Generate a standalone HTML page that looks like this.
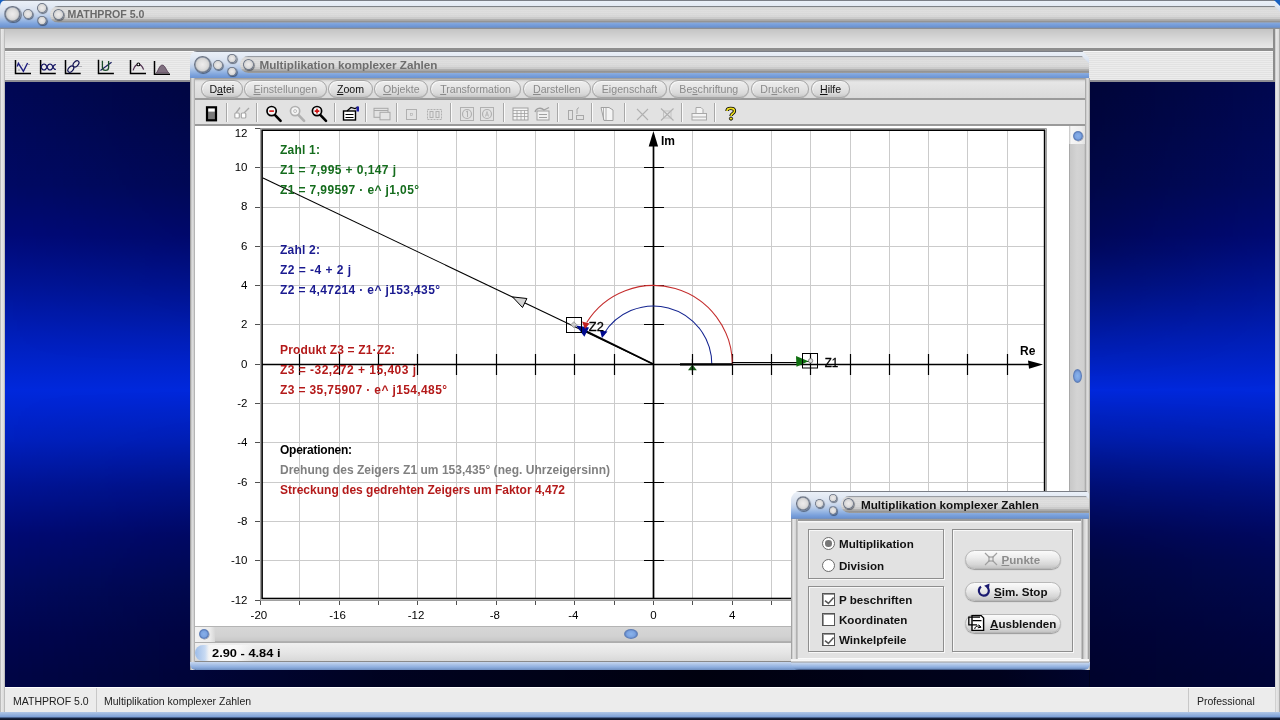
<!DOCTYPE html>
<html><head><meta charset="utf-8">
<style>
*{margin:0;padding:0;box-sizing:border-box}
html,body{width:1280px;height:720px;overflow:hidden;background:#d6d6d6;font-family:"Liberation Sans",sans-serif}
.a{position:absolute}
/* outer window */
#otitle{left:0;top:0;width:1280px;height:29px;background:linear-gradient(#6b7c92 0,#6b7c92 1px,#e4ecf6 1px,#d6e2f0 6px,#b8cce6 14px,#86a8dc 22px,#6e96d2 27px,#7c8ea6 28px,#8a8a8a 29px)}
.pill{background:linear-gradient(#7a7a7a 0,#8c8c8c 1px,#cfcfcf 2px,#dcdcdc 6px,#d8d8d8 10px,#e6e6e6 13px,#cfcfcf 15px,#8d8d8d 16px);border-radius:9px}
#omenu{left:5px;top:29px;width:1270px;height:19px;background:linear-gradient(#c4c4c4 0,#c8c8c8 2px,#d6d6d6 9px,#e2e2e2 15px,#e8e8e8 19px)}
#otool{left:5px;top:48px;width:1268px;height:34px;background:repeating-linear-gradient(#ececec 0,#ececec 1px,#e2e2e2 1px,#e2e2e2 2px);border-top:3px solid #8e8e8e;border-bottom:2px solid #8e8e94;box-shadow:inset 0 1px 0 #f8f8f8}
#mdi{left:5px;top:82px;width:1270px;height:605px;background:linear-gradient(rgb(0, 8, 85) 8px,rgb(0, 10, 100) 103px,rgb(0, 10, 120) 153px,rgb(0, 20, 150) 203px,rgb(0, 30, 185) 253px,rgb(0, 40, 220) 308px,rgb(0, 32, 190) 358px,rgb(0, 20, 150) 403px,rgb(0, 10, 115) 453px,rgb(0, 10, 95) 503px,rgb(0, 6, 80) 553px,rgb(0, 6, 70) 593px)}
#ostatus{left:0;top:687px;width:1280px;height:25px;background:#ececec;border-top:1px solid #fff;font-size:11px;color:#222}
#obottom{left:0;top:712px;width:1280px;height:8px;background:linear-gradient(#b0c6e6,#7b9fd6 5px,#1a2a4a 6px,#0a1020)}
#oleft{left:0;top:29px;width:5px;height:683px;background:linear-gradient(90deg,#9c9c9c,#e8e8e8 1.2px,#dadada 4px,#a0a0a0 5px)}
#oright{left:1275px;top:29px;width:5px;height:683px;background:linear-gradient(90deg,#b8b8b8,#e8e8e8 1px,#dcdcdc 3.5px,#9a9a9a 5px)}
/* child window */
#child{left:190px;top:50px;width:900px;height:620px}
.ctitle{left:0;top:0;width:899px;height:28px;border-radius:8px 8px 0 0;background:linear-gradient(#8a9ab0 0,#dfe8f4 1px,#d3dff0 5px,#b6cae6 12px,#88aadc 20px,#6e96d2 26px,#7e8ea4 27px,#8a8a8a 28px)}
.circ{position:absolute;border-radius:50%;background:radial-gradient(circle closest-side at 50% 50%,#eeecec 0,#e0dfdf 50%,#d2d2d2 74%,#9098a6 84%,#687080 93%,rgba(80,88,104,.55) 100%);box-shadow:0.8px 1px 0.8px rgba(30,36,50,.55)}
.menu{font-size:11px;color:#8a8a8a}
.mp{position:absolute;top:80px;height:17.5px;border-radius:9px;background:linear-gradient(#eeeeee,#e4e4e4 45%,#d8d8d8 80%,#c6c6c6);border:1px solid #a6a6a6;box-shadow:inset 1px 1px 0 #f6f6f6,0 0.5px 0.5px #b0b0b0;text-align:center;line-height:15px;padding-top:1.6px;font:10.6px 'Liberation Sans';color:#8a8a8a;white-space:nowrap}
.mp.on{color:#111}
.u{text-decoration:underline}
</style></head><body>
<style>
.gb{border:1px solid #8e8e8e;box-shadow:inset 1px 1px 0 #f8f8f8,1px 1px 0 #f8f8f8}
.radio{width:13px;height:13px;border-radius:50%;border:1.3px solid #6a6a6a;background:#fff}
.radio i{position:absolute;left:2.2px;top:2.2px;width:6.6px;height:6.6px;border-radius:50%;background:#777}
.chk{width:13px;height:13px;border:1px solid #555;background:#fff;box-shadow:inset 1px 1px 0 #999}
.chk svg{position:absolute;left:0;top:0}
.dl{font:bold 11.6px 'Liberation Sans';color:#111;line-height:14px;white-space:nowrap}
.btn{width:96px;height:19px;border-radius:10px;background:linear-gradient(#fbfbfb,#ececec 40%,#d6d6d6 80%,#c4c4c4);border:1px solid #b8b8b8;box-shadow:0 1px 1px #9a9a9a}
</style>
<style>
.mp{position:absolute;top:80px;height:17.5px;border-radius:9px;background:linear-gradient(#eeeeee,#e4e4e4 45%,#d8d8d8 80%,#c6c6c6);border:1px solid #a6a6a6;box-shadow:inset 1px 1px 0 #f6f6f6,0 0.5px 0.5px #b0b0b0;text-align:center;line-height:15px;padding-top:1.6px;font:10.6px 'Liberation Sans';color:#8a8a8a;white-space:nowrap}
.mp.on{color:#111}
</style>
<style>
.tb{background:linear-gradient(#7a7e86 0,#7a7e86 0.8px,#eaf0f8 1px,#e2e9f3 6px,#d2ddee 12px,#b6cae8 17px,#94b4e2 21px,#7ca2dc 24px,#6a92d0 27.3px,#8a8e96 28px,#909090 100%)}
.tpill{background:repeating-linear-gradient(rgba(255,255,255,.12) 0,rgba(255,255,255,.12) 1px,rgba(0,0,0,0) 1px,rgba(0,0,0,0) 2px),linear-gradient(#666a70 0,#767a80 1px,#d2d2d2 1.2px,#dcdcdc 5px,#d6d6d6 10px,#c4c4c4 12.5px,#9c9c9c 14.5px,#8a8a8a 16.8px);border-radius:8.4px 0 0 8.4px}
</style>
<div id="root" style="position:absolute;left:0;top:0;width:1280px;height:720px;will-change:transform">
<div class="a" style="left:0;top:0;width:8px;height:8px;background:#1860c0"></div><div class="a" style="left:1270px;top:0;width:10px;height:8px;background:#1860c0"></div>
<div class="a tb" style="left:0px;top:0px;width:1280px;height:29px;border-top-left-radius:6px;clip-path:polygon(0 0,1274px 0,1280px 6px,1280px 100%,0 100%)"></div>
<div class="a tpill" style="left:50px;top:5.8px;width:1230px;height:16.8px;clip-path:polygon(0 0,1224px 0,1230px 6px,1230px 100%,0 100%)"></div>
<div class="a circ" style="left:4.1px;top:5.8px;width:16.5px;height:16.5px"></div>
<div class="a circ" style="left:23.2px;top:9.0px;width:10px;height:10px"></div>
<div class="a circ" style="left:37.2px;top:3.2px;width:9.5px;height:9.5px"></div>
<div class="a circ" style="left:37.2px;top:15.9px;width:9.5px;height:9.5px"></div>
<div class="a circ" style="left:52.5px;top:8.7px;width:11px;height:11px"></div>
<div class="a" style="left:67.5px;top:7.8px;font:bold 10.6px 'Liberation Sans';color:#6a6a6a;line-height:13px;white-space:nowrap">MATHPROF 5.0</div>
<div class="a" id="omenu"></div>
<div class="a" id="otool"></div>
<svg class="a" style="left:5px;top:50px" width="200" height="30" viewBox="5 50 200 30">
<path d="M15.5 60.1V73.4H31" stroke="#000" stroke-width="1.5" fill="none"/>
<path d="M40.6 60.1V73.4H55.8" stroke="#000" stroke-width="1.5" fill="none"/>
<path d="M65.5 60V73.5H80.7" stroke="#000" stroke-width="1.5" fill="none"/>
<path d="M98.5 59.8V73.4H113.9" stroke="#000" stroke-width="1.5" fill="none"/>
<path d="M130.5 59.9V73.4H146" stroke="#000" stroke-width="1.5" fill="none"/>
<path d="M154.5 61V74.3H170" stroke="#000" stroke-width="1.5" fill="none"/>
<path d="M17.2 66.4L18.4 63.3L23.4 71.4L27.6 63" stroke="#1e1e80" stroke-width="1.4" fill="none"/><path d="M18 70H20M22 65.5L23 65M28 64.5H30" stroke="#8a8a9a" stroke-width="0.8"/>
<path d="M41 67C42.5 63 45.5 63 47 67C48.5 71 51.5 71 53 67C53.7 65 55 64.3 55.8 64.6M41 67C42.5 71 45.5 71 47 67C48.5 63 51.5 63 53 67C53.7 69 55 69.7 55.8 69.4" stroke="#101060" stroke-width="1.2" fill="none"/>
<path d="M73 66.5H82" stroke="#9a9aa0" stroke-width="0.7"/><ellipse cx="76" cy="63.9" rx="2.3" ry="3.6" transform="rotate(40 76 63.9)" stroke="#101050" stroke-width="1.2" fill="none"/><ellipse cx="70.8" cy="69.1" rx="2.3" ry="3.6" transform="rotate(40 70.8 69.1)" stroke="#101050" stroke-width="1.2" fill="none"/>
<path d="M100.4 70.6L111.6 62.3" stroke="#1a2060" stroke-width="1.2"/><path d="M102.4 60.8V67.5C102.4 71.3 108.6 71.3 108.6 67.5V61" stroke="#1a4a2a" stroke-width="1.3" fill="none"/>
<path d="M133.1 70.4C134.5 66 136.5 64.4 138.4 64.4C140.5 64.4 142.5 66.5 143.6 69.6" stroke="#503050" stroke-width="1.3" fill="none"/><circle cx="138.4" cy="64.4" r="1.4" fill="#fff" stroke="#000" stroke-width="1.1"/>
<path d="M156.4 72.8C158.5 70 159.5 65.1 162.3 65.1C165 65.1 166 70 168.7 72.8Z" fill="#807080" stroke="#503a50" stroke-width="0.8"/>
</svg>
<div class="a" id="mdi" style="width:1270px"></div>
<div class="a" style="left:1089px;top:82px;width:186px;height:308px;background:linear-gradient(90deg,rgba(0,0,8,.36),rgba(0,0,8,.06));-webkit-mask-image:linear-gradient(#000 0,#000 40px,rgba(0,0,0,.75) 168px,transparent 308px)"></div>
<div class="a" style="left:1089px;top:390px;width:186px;height:297px;background:linear-gradient(90deg,rgba(0,0,8,.4),rgba(0,0,8,.22));-webkit-mask-image:linear-gradient(transparent 0,#000 170px,#000 297px)"></div>
<div class="a" style="left:190px;top:600px;width:900px;height:87px;background:linear-gradient(90deg,rgba(0,0,8,.22) 0,rgba(0,0,8,.6) 190px,rgba(0,0,6,.86) 510px,rgba(0,0,8,.66) 810px,rgba(0,0,8,.4) 900px)"></div>
<div class="a" style="left:5px;top:82px;width:185px;height:280px;background:linear-gradient(90deg,rgba(0,0,8,0),rgba(0,0,8,.22));-webkit-mask-image:linear-gradient(#000 0,#000 30px,transparent 280px)"></div>
<div class="a" style="left:5px;top:390px;width:185px;height:297px;background:linear-gradient(90deg,rgba(0,0,8,0),rgba(0,0,8,.2));-webkit-mask-image:linear-gradient(transparent 0,#000 210px,#000 297px)"></div>
<div class="a" id="ostatus" style="font-size:10.5px">
 <div class="a" style="left:13px;top:7px">MATHPROF 5.0</div>
 <div class="a" style="left:96px;top:0;width:1px;height:24px;background:#c8c8c8"></div>
 <div class="a" style="left:104px;top:7px">Multiplikation komplexer Zahlen</div>
 <div class="a" style="left:1188px;top:0;width:1px;height:24px;background:#c8c8c8"></div>
 <div class="a" style="left:1197px;top:7px">Professional</div>
</div>
<div class="a" id="oleft"></div><div class="a" id="oright"></div><div class="a" style="left:1273px;top:29px;width:2px;height:53px;background:#8c8c8c"></div>
<div class="a" id="obottom"></div>

<!-- child window -->
<div class="a tb" style="left:190px;top:50.5px;width:899px;height:28px;border-top-left-radius:7px;clip-path:polygon(0 0,892px 0,899px 7px,899px 100%,0 100%)"></div>
<div class="a tpill" style="left:240px;top:56.3px;width:849px;height:16.8px;clip-path:polygon(0 0,842px 0,849px 7px,849px 100%,0 100%)"></div>
<div class="a circ" style="left:194.1px;top:56.2px;width:16.5px;height:16.5px"></div>
<div class="a circ" style="left:213.2px;top:59.5px;width:10px;height:10px"></div>
<div class="a circ" style="left:227.2px;top:53.8px;width:9.5px;height:9.5px"></div>
<div class="a circ" style="left:227.2px;top:66.5px;width:9.5px;height:9.5px"></div>
<div class="a circ" style="left:242.5px;top:59.2px;width:11px;height:11px"></div>
<div class="a" style="left:259.5px;top:57.5px;font:bold 11.7px 'Liberation Sans';color:#6e6e6e;line-height:13px;white-space:nowrap">Multiplikation komplexer Zahlen</div>
<div class="a" style="left:190px;top:78px;width:900px;height:592px;background:linear-gradient(90deg,#8c8c8c,#e0e0e0 2px,#cfcfcf 4px,#9a9a9a 5px,transparent 5px,transparent 895px,#9a9a9a 895px,#e0e0e0 897px,#cfcfcf 899px,#8c8c8c 900px)"></div>
<div class="a" style="left:195px;top:78px;width:890px;height:20px;background:linear-gradient(#a0a0a0 0,#a0a0a0 1px,#cfcfcf 2px,#e6e6e6 4px,#dadada)"></div>
<div class="a" style="left:195px;top:98px;width:890px;height:28px;background:#e2e2e2;border-top:2px solid #9a9a9a;border-bottom:2px solid #9a9a9a"></div>
<div class="a mp on" style="left:200.8px;width:42.0px">D<span class="u">a</span>tei</div>
<div class="a mp" style="left:244.0px;width:82.6px"><span class="u">E</span>instellungen</div>
<div class="a mp on" style="left:327.9px;width:45.1px"><span class="u">Z</span>oom</div>
<div class="a mp" style="left:374.3px;width:54.1px"><span class="u">O</span>bjekte</div>
<div class="a mp" style="left:429.7px;width:91.8px"><span class="u">T</span>ransformation</div>
<div class="a mp" style="left:523.0px;width:67.7px"><span class="u">D</span>arstellen</div>
<div class="a mp" style="left:592.0px;width:75.0px">Ei<span class="u">g</span>enschaft</div>
<div class="a mp" style="left:668.6px;width:80.4px">Be<span class="u">s</span>chriftung</div>
<div class="a mp" style="left:750.6px;width:58.8px">Dr<span class="u">u</span>cken</div>
<div class="a mp on" style="left:810.8px;width:39.6px"><span class="u">H</span>ilfe</div>
<svg class="a" style="left:195px;top:100px" width="890" height="26" viewBox="195 100 890 26">
<path d="M226.5 103V122" stroke="#a8a8a8"/><path d="M227.5 103V122" stroke="#fafafa"/>
<path d="M256.5 103V122" stroke="#a8a8a8"/><path d="M257.5 103V122" stroke="#fafafa"/>
<path d="M334.5 103V122" stroke="#a8a8a8"/><path d="M335.5 103V122" stroke="#fafafa"/>
<path d="M365.5 103V122" stroke="#a8a8a8"/><path d="M366.5 103V122" stroke="#fafafa"/>
<path d="M396.5 103V122" stroke="#a8a8a8"/><path d="M397.5 103V122" stroke="#fafafa"/>
<path d="M450.5 103V122" stroke="#a8a8a8"/><path d="M451.5 103V122" stroke="#fafafa"/>
<path d="M503.5 103V122" stroke="#a8a8a8"/><path d="M504.5 103V122" stroke="#fafafa"/>
<path d="M557.5 103V122" stroke="#a8a8a8"/><path d="M558.5 103V122" stroke="#fafafa"/>
<path d="M591.5 103V122" stroke="#a8a8a8"/><path d="M592.5 103V122" stroke="#fafafa"/>
<path d="M624.5 103V122" stroke="#a8a8a8"/><path d="M625.5 103V122" stroke="#fafafa"/>
<path d="M681.5 103V122" stroke="#a8a8a8"/><path d="M682.5 103V122" stroke="#fafafa"/>
<path d="M714.5 103V122" stroke="#a8a8a8"/><path d="M715.5 103V122" stroke="#fafafa"/>
<rect x="207" y="107.3" width="9" height="13" fill="#7a7a7a" stroke="#000" stroke-width="2.2"/><rect x="208.3" y="108.6" width="6.4" height="3" fill="#fff"/>
<path d="M236 113L240 107.5M244 113L249 108" stroke="#a8a8a8" stroke-width="1.3" fill="none"/><rect x="234.8" y="113" width="4.5" height="5" rx="1" fill="#fff" stroke="#a8a8a8" stroke-width="1.2"/><rect x="241.3" y="113" width="4.5" height="5" rx="1" fill="#fff" stroke="#a8a8a8" stroke-width="1.2"/>
<path d="M274.6 114.6L280.6 120.89999999999999" stroke="#000" stroke-width="2.6" stroke-linecap="round"/><circle cx="271.6" cy="111.1" r="4.6" fill="#f4f4f4" stroke="#000" stroke-width="1.7"/><path d="M269.3 111.1H273.90000000000003" stroke="#d01010" stroke-width="1.6"/>
<path d="M298.1 114.6L304.1 120.89999999999999" stroke="#b0b0b0" stroke-width="2.6" stroke-linecap="round"/><circle cx="295.1" cy="111.1" r="4.6" fill="#f4f4f4" stroke="#b0b0b0" stroke-width="1.7"/><circle cx="295.1" cy="111.1" r="1.5" fill="none" stroke="#b0b0b0" stroke-width="0.8"/>
<path d="M320 114.6L326 120.89999999999999" stroke="#000" stroke-width="2.6" stroke-linecap="round"/><circle cx="317" cy="111.1" r="4.6" fill="#f4f4f4" stroke="#000" stroke-width="1.7"/><path d="M314.7 111.1H319.3M317 108.8V113.39999999999999" stroke="#d01010" stroke-width="1.6"/>
<rect x="343.5" y="111" width="12" height="9" fill="#fff" stroke="#000" stroke-width="1.4"/><path d="M345.5 114.5H353.5M345.5 117.5H353.5" stroke="#000" stroke-width="1"/><path d="M347 111L351 107.5L355 108.5L358 107" stroke="#000" stroke-width="1.2" fill="none"/><rect x="356.5" y="106.5" width="2.5" height="5" fill="#1a1aa0"/>
<rect x="374" y="108.3" width="14" height="9" fill="none" stroke="#a8a8a8" stroke-width="1"/><rect x="380" y="112.3" width="10" height="7.5" fill="#e4e4e4" stroke="#a8a8a8" stroke-width="1"/><path d="M374 110.5H388" stroke="#a8a8a8"/>
<rect x="406.5" y="109.5" width="10" height="10" fill="none" stroke="#b0b0b0"/><rect x="410.5" y="113.5" width="2" height="2" fill="none" stroke="#b0b0b0" stroke-width="0.6"/>
<rect x="427.5" y="109.5" width="14" height="10" fill="none" stroke="#b0b0b0" stroke-dasharray="2 1"/><rect x="430" y="111.5" width="3" height="6" fill="none" stroke="#b0b0b0"/><rect x="436" y="111.5" width="3" height="6" fill="none" stroke="#b0b0b0"/>
<rect x="460.5" y="107.5" width="13" height="13" fill="none" stroke="#b0b0b0"/><circle cx="467" cy="114" r="4.5" fill="none" stroke="#b0b0b0" stroke-width="1.2"/><path d="M466 112L467.5 111V117" stroke="#b0b0b0" fill="none"/>
<rect x="480.5" y="107.5" width="13" height="13" fill="none" stroke="#b0b0b0"/><circle cx="487" cy="114" r="4.5" fill="none" stroke="#b0b0b0" stroke-width="1.2"/><path d="M485.5 116.5L487 111.5L488.5 116.5M485.8 115H488.2" stroke="#b0b0b0" fill="none" stroke-width="0.8"/>
<rect x="513" y="108" width="15" height="12" fill="#f4f4f4" stroke="#a0a0a0"/><path d="M513 110.5H528M513 113.5H528M513 116.5H528M517 110.5V120M521 110.5V120M524.5 110.5V120" stroke="#a0a0a0" stroke-width="0.8"/>
<rect x="537" y="111" width="12" height="9" fill="#f0f0f0" stroke="#a0a0a0"/><path d="M539 114.5H547M539 117.5H547" stroke="#a0a0a0"/><path d="M535 112C536 108 541 107 544 110L549 107.5" stroke="#a0a0a0" stroke-width="1.3" fill="none"/>
<rect x="568.5" y="110.5" width="4" height="9" fill="none" stroke="#a8a8a8"/><rect x="576.5" y="115.5" width="7" height="4" fill="none" stroke="#a8a8a8"/><path d="M577 114V109L579 107.5" stroke="#a8a8a8" fill="none"/>
<path d="M601 107.5H609L613 110V120.5H604Z" fill="#f4f4f4" stroke="#a0a0a0"/><path d="M603.5 108V120M606 108V120" stroke="#a0a0a0" stroke-width="0.8"/>
<path d="M637 109L648 120M648 109L637 120" stroke="#b0b0b0" stroke-width="1.1"/><path d="M640 112L645 117M645 112L640 117" stroke="#b0b0b0" stroke-width="0.8"/>
<path d="M661 108.5L673.5 120.5M673.5 108.5L661 120.5" stroke="#b0b0b0" stroke-width="1.1"/><rect x="663.5" y="111" width="7.5" height="7" fill="none" stroke="#b8b8b8" stroke-width="0.7"/>
<rect x="692" y="113.5" width="14.5" height="6.5" fill="#f4f4f4" stroke="#a8a8a8"/><path d="M696 113V107.5H701L703 109.5V113" fill="#f4f4f4" stroke="#a8a8a8"/><path d="M692 117H706.5" stroke="#a8a8a8"/>
<path d="M727 111C727 107.5 734.5 107.5 734.5 111C734.5 113.5 731 113.5 731 116" stroke="#000" stroke-width="3.3" fill="none"/><path d="M727 111C727 107.5 734.5 107.5 734.5 111C734.5 113.5 731 113.5 731 116" stroke="#f0e020" stroke-width="1.6" fill="none"/><circle cx="731" cy="118.6" r="1.6" fill="#f0e020" stroke="#000" stroke-width="0.9"/>
</svg>
<svg class="a" style="left:195px;top:126px" width="874" height="500" viewBox="195 126 874 500">
<rect x="195" y="126" width="874" height="500" fill="#fff"/>
<path d="M299.5 130V598M339.5 130V598M378.5 130V598M417.5 130V598M456.5 130V598M496.5 130V598M535.5 130V598M574.5 130V598M614.5 130V598M692.5 130V598M732.5 130V598M771.5 130V598M810.5 130V598M850.5 130V598M889.5 130V598M928.5 130V598M967.5 130V598M1007.5 130V598M262 560.5H1045M262 521.5H1045M262 482.5H1045M262 442.5H1045M262 403.5H1045M262 324.5H1045M262 285.5H1045M262 246.5H1045M262 207.5H1045M262 167.5H1045" stroke="#cbcbcb" stroke-width="1" fill="none"/>
<path d="M255 600.5H261M255 560.5H261M255 521.5H261M255 482.5H261M255 442.5H261M255 403.5H261M255 364.5H261M255 324.5H261M255 285.5H261M255 246.5H261M255 207.5H261M255 167.5H261M255 128.5H261M260.5 600V605M299.5 600V605M339.5 600V605M378.5 600V605M417.5 600V605M456.5 600V605M496.5 600V605M535.5 600V605M574.5 600V605M614.5 600V605M653.5 600V605M692.5 600V605M732.5 600V605M771.5 600V605M810.5 600V605M850.5 600V605M889.5 600V605M928.5 600V605M967.5 600V605M1007.5 600V605M1046.5 600V605" stroke="#505050" stroke-width="1" fill="none"/>
<path d="M260.5 128.5V600.5H1046.5V128.5Z" stroke="#a0a0a0" stroke-width="1" fill="none"/>
<rect x="262.1" y="130.2" width="782.5" height="468.3" stroke="#000" stroke-width="1.6" fill="none"/>
<g font-family="Liberation Sans" font-size="11.5" fill="#000"><text x="247.5" y="603.5" text-anchor="end">-12</text><text x="247.5" y="564.1" text-anchor="end">-10</text><text x="247.5" y="524.8" text-anchor="end">-8</text><text x="247.5" y="485.5" text-anchor="end">-6</text><text x="247.5" y="446.2" text-anchor="end">-4</text><text x="247.5" y="406.9" text-anchor="end">-2</text><text x="247.5" y="367.6" text-anchor="end">0</text><text x="247.5" y="328.3" text-anchor="end">2</text><text x="247.5" y="289.0" text-anchor="end">4</text><text x="247.5" y="249.7" text-anchor="end">6</text><text x="247.5" y="210.4" text-anchor="end">8</text><text x="247.5" y="171.1" text-anchor="end">10</text><text x="247.5" y="136.7" text-anchor="end">12</text><text x="258.9" y="619" text-anchor="middle">-20</text><text x="337.5" y="619" text-anchor="middle">-16</text><text x="416.1" y="619" text-anchor="middle">-12</text><text x="494.8" y="619" text-anchor="middle">-8</text><text x="573.4" y="619" text-anchor="middle">-4</text><text x="653.5" y="619" text-anchor="middle">0</text><text x="732.1" y="619" text-anchor="middle">4</text><text x="810.7" y="619" text-anchor="middle">8</text><text x="889.4" y="619" text-anchor="middle">12</text><text x="968.0" y="619" text-anchor="middle">16</text><text x="1046.6" y="619" text-anchor="middle">20</text></g>
<path d="M299.5 354V375M339.5 354V375M378.5 354V375M417.5 354V375M456.5 354V375M496.5 354V375M535.5 354V375M574.5 354V375M614.5 354V375M692.5 354V375M732.5 354V375M771.5 354V375M810.5 354V375M850.5 354V375M889.5 354V375M928.5 354V375M967.5 354V375M1007.5 354V375M644 560.5H664M644 521.5H664M644 482.5H664M644 442.5H664M644 403.5H664M644 324.5H664M644 285.5H664M644 246.5H664M644 207.5H664M644 167.5H664" stroke="#000" stroke-width="1.2" fill="none"/>
<path d="M262 364.5H1030M653.5 598V140" stroke="#000" stroke-width="1.7" fill="none"/>
<path d="M1043 364.6L1028 360.4L1029 368.8Z" fill="#000"/>
<path d="M653.4 131L648.7 146.5H658.1Z" fill="#000"/>
<text x="1020" y="355.2" font-family="Liberation Sans" font-weight="bold" font-size="12">Re</text>
<text x="661" y="145.3" font-family="Liberation Sans" font-weight="bold" font-size="12">Im</text>
<path d="M653.5 364.3L263 177.92" stroke="#000" stroke-width="1.1" fill="none"/>
<path d="M653.5 364.3L582.88 329.49" stroke="#000" stroke-width="1.7" fill="none"/>
<path d="M512.5 296.9L526.9 298.5L522.5 307.5Z" fill="#d4d4d4" stroke="#000" stroke-width="1"/>
<path d="M711.80 364.30A58.3 58.3 0 0 0 602.76 335.59" stroke="#142490" stroke-width="1.05" fill="none"/>
<path d="M732.30 364.30A78.8 78.8 0 0 0 586.67 322.54" stroke="#c42c2c" stroke-width="1.05" fill="none"/>
<path d="M600 330.5L607.5 331.5L602 338Z" fill="#000a90"/>
<path d="M576 325.6L589 327.5L584.4 336.7Z" fill="#000a90"/>
<path d="M582 321.5L589.5 323.5L585 329Z" fill="#c02020"/>
<rect x="566.5" y="317.5" width="15" height="15" fill="none" stroke="#000" stroke-width="1"/>
<path d="M573.8 321.7L576.8 324.7L573.8 327.7L570.8 324.7Z" fill="#c8c8c8" stroke="#777" stroke-width="0.6"/>
<text x="588.8" y="331" font-family="Liberation Sans" font-size="12" stroke="#000" stroke-width="0.3" textLength="15" lengthAdjust="spacingAndGlyphs">Z2</text>
<path d="M680 364.3H732.6" stroke="#000" stroke-width="2.2"/>
<path d="M732 362.5H800" stroke="#000" stroke-width="1" shape-rendering="crispEdges"/><path d="M797 361.5H809" stroke="#000" stroke-width="1" shape-rendering="crispEdges"/>
<path d="M808.5 361.3L796 356L796.5 366.7Z" fill="#107010"/>
<rect x="802.5" y="353.5" width="15" height="14.5" fill="none" stroke="#000" stroke-width="1"/>
<circle cx="810.6" cy="360.8" r="2.2" fill="#ddd" stroke="#666" stroke-width="0.7"/>
<text x="824.7" y="366.8" font-family="Liberation Sans" font-size="12" stroke="#000" stroke-width="0.3" textLength="13.5" lengthAdjust="spacingAndGlyphs">Z1</text>
<path d="M692.4 364.6L688 370.2H696.8Z" fill="#1a5a1a"/>
<path d="M692.4 359V374" stroke="#000" stroke-width="1"/>
<g font-family="Liberation Sans" font-weight="bold" font-size="12"><text x="280" y="154" fill="#146c1c" textLength="40" lengthAdjust="spacing">Zahl 1:</text><text x="280" y="174" fill="#146c1c" textLength="116" lengthAdjust="spacing">Z1 = 7,995 + 0,147 j</text><text x="280" y="194" fill="#146c1c" textLength="139" lengthAdjust="spacing">Z1 = 7,99597 · e^ j1,05°</text><text x="280" y="254" fill="#1a1a90" textLength="40" lengthAdjust="spacing">Zahl 2:</text><text x="280" y="274" fill="#1a1a90" textLength="71" lengthAdjust="spacing">Z2 = -4 + 2 j</text><text x="280" y="294" fill="#1a1a90" textLength="160" lengthAdjust="spacing">Z2 = 4,47214 · e^ j153,435°</text><text x="280" y="354" fill="#b41a1a" textLength="115" lengthAdjust="spacing">Produkt Z3 = Z1·Z2:</text><text x="280" y="374" fill="#b41a1a" textLength="136" lengthAdjust="spacing">Z3 = -32,272 + 15,403 j</text><text x="280" y="394" fill="#b41a1a" textLength="167" lengthAdjust="spacing">Z3 = 35,75907 · e^ j154,485°</text><text x="280" y="454" fill="#000000" textLength="72" lengthAdjust="spacing">Operationen:</text><text x="280" y="474" fill="#808080" textLength="330" lengthAdjust="spacing">Drehung des Zeigers Z1 um 153,435° (neg. Uhrzeigersinn)</text><text x="280" y="494" fill="#b41a1a" textLength="285" lengthAdjust="spacing">Streckung des gedrehten Zeigers um Faktor 4,472</text></g>
</svg>
<div class="a" style="left:1069px;top:126px;width:16px;height:500px;background:linear-gradient(90deg,#a8a8a8 0,#a8a8a8 1px,#c8c8c8 1px,#d4d4d4 8px,#cfcfcf 15px,#b8b8b8 16px)"></div>
<div class="a" style="left:1069px;top:126px;width:16px;height:18px;background:linear-gradient(90deg,#c0c0c0 0,#f6f6f6 2px,#eeeeee 12px,#e0e0e0 16px)"></div>
<div class="a" style="left:1072.5px;top:130.5px;width:10px;height:10px;border-radius:50%;background:radial-gradient(circle closest-side,#88b0ea 0,#7aa2e0 60%,#5a7cba 85%,#6a88b8 100%);box-shadow:0.5px 0.5px 0.5px rgba(0,0,40,.4)"></div>
<div class="a" style="left:1072.5px;top:369px;width:9px;height:14px;border-radius:50%;background:radial-gradient(closest-side,#8ab4ec 0,#7aa2e0 60%,#5a7cba 88%,#7088b0 100%)"></div>
<div class="a" style="left:195px;top:626px;width:874px;height:17px;background:linear-gradient(#b4b4b4 0,#b4b4b4 1px,#d6d6d6 1px,#d2d2d2 10px,#c8c8c8 15px,#9a9a9a 16px,#c0c0c0 17px)"></div>
<div class="a" style="left:195px;top:627px;width:20px;height:15px;background:linear-gradient(90deg,#f2f2f2,#ebebeb 75%,#d6d6d6)"></div>
<div class="a" style="left:198.5px;top:629px;width:10px;height:10px;border-radius:50%;background:radial-gradient(circle closest-side,#88b0ea 0,#7aa2e0 60%,#5a7cba 85%,#6a88b8 100%);box-shadow:0.5px 0.5px 0.5px rgba(0,0,40,.4)"></div>
<div class="a" style="left:624px;top:629px;width:14px;height:10px;border-radius:50%;background:radial-gradient(closest-side,#8ab4ec 0,#7aa2e0 60%,#5a7cba 88%,#7088b0 100%)"></div>
<div class="a" style="left:1069px;top:626px;width:16px;height:17px;background:#d8d8d8"></div>
<div class="a" style="left:195px;top:643px;width:890px;height:19px;background:linear-gradient(#f0f0f0,#e4e4e4 60%,#d8d8d8);border-bottom:1px solid #8a8a8a"></div>
<div class="a" style="left:195px;top:645px;width:60px;height:16px;border-radius:8px 0 0 8px;background:linear-gradient(90deg,#9cbce8,#c8daf2 10px,#f4f4f4 14px,#fafafa 40px,rgba(240,240,240,0))"></div>
<svg class="a" style="left:195px;top:643px" width="200" height="19" viewBox="195 643 200 19"><text x="212" y="657.4" font-family="Liberation Sans" font-weight="bold" font-size="11.8" textLength="68.5" lengthAdjust="spacingAndGlyphs" fill="#000">2.90 - 4.84 i</text></svg>
<div class="a" style="left:190px;top:662px;width:900px;height:8px;border-radius:0 0 6px 6px;background:linear-gradient(#c6d6ee,#90b0e0 5px,#6f8fc0)"></div>
<!-- dialog -->
<div class="a tb" style="left:791px;top:490.5px;width:298px;height:29px;border-top-left-radius:9px;clip-path:polygon(0 0,295px 0,298px 3px,298px 100%,0 100%)"></div>
<div class="a tpill" style="left:841px;top:496.3px;width:248px;height:16.8px;clip-path:polygon(0 0,245px 0,248px 3px,248px 100%,0 100%)"></div>
<div class="a circ" style="left:795.8px;top:496.4px;width:14.5px;height:14.5px"></div>
<div class="a circ" style="left:815.1px;top:499.1px;width:9px;height:9px"></div>
<div class="a circ" style="left:828.5px;top:493.8px;width:8.5px;height:8.5px"></div>
<div class="a circ" style="left:828.5px;top:506.4px;width:8.5px;height:8.5px"></div>
<div class="a circ" style="left:843.2px;top:498.1px;width:11px;height:11px"></div>
<div class="a" style="left:861px;top:497.5px;font:bold 11.7px 'Liberation Sans';color:#111;line-height:13px;white-space:nowrap">Multiplikation komplexer Zahlen</div>
<div class="a" style="left:791px;top:519px;width:298px;height:144px;background:linear-gradient(90deg,#8c8c8c,#e8e8e8 2px,#d4d4d4 5px,#8e8e8e 6px,#f4f4f4 7px,transparent 7px,transparent 290px,#f4f4f4 290px,#8e8e8e 291px,#d4d4d4 293px,#e8e8e8 296px,#8c8c8c 298px)"></div>
<div class="a" style="left:798px;top:519px;width:283px;height:140px;background:#e2e2e2;border-top:2px solid #9a9a9a;box-shadow:inset 0 1.5px 0 #f8f8f8;border-bottom:1px solid #fafafa"></div>
<div class="a" style="left:791px;top:659px;width:298px;height:11px;border-radius:0 0 8px 8px;background:linear-gradient(#f0f0f0 0,#fafafa 2px,#9a9a9a 3px,#c6d6ee 4px,#90b0e0 8px,#6f8fc0 10px,#2a3a60 11px)"></div>
<div class="a gb" style="left:808px;top:529px;width:136px;height:50px"></div>
<div class="a gb" style="left:808px;top:586px;width:136px;height:66px"></div>
<div class="a gb" style="left:952px;top:529px;width:121px;height:123px"></div>
<div class="a radio" style="left:822px;top:537px"><i></i></div>
<div class="a radio" style="left:822px;top:558.5px"></div>
<div class="a dl" style="left:839px;top:537px">Multiplikation</div>
<div class="a dl" style="left:839px;top:559px">Division</div>
<div class="a chk" style="left:822px;top:593px"><svg width="12" height="12" viewBox="0 0 12 12"><path d="M2 6.6L5.4 9.4L10.6 3.4" stroke="#5a5a5a" stroke-width="1.6" fill="none"/></svg></div>
<div class="a chk" style="left:822px;top:613px"></div>
<div class="a chk" style="left:822px;top:633px"><svg width="12" height="12" viewBox="0 0 12 12"><path d="M2 6.6L5.4 9.4L10.6 3.4" stroke="#5a5a5a" stroke-width="1.6" fill="none"/></svg></div>
<div class="a dl" style="left:839px;top:593px">P beschriften</div>
<div class="a dl" style="left:839px;top:613px">Koordinaten</div>
<div class="a dl" style="left:839px;top:633px">Winkelpfeile</div>
<div class="a btn" style="left:965px;top:549.5px"></div>
<div class="a btn" style="left:965px;top:582px"></div>
<div class="a btn" style="left:965px;top:614.2px"></div>
<div class="a dl" style="left:1001.5px;top:552.5px;color:#8c8c8c"><span class="u">P</span>unkte</div>
<div class="a dl" style="left:994px;top:584.6px"><span class="u">S</span>im. Stop</div>
<div class="a dl" style="left:990px;top:616.8px"><span class="u">A</span>usblenden</div>
<svg class="a" style="left:984px;top:552px" width="14" height="14" viewBox="0 0 14 14"><path d="M1 1L13 13M13 1L1 13" stroke="#a0a0a0" stroke-width="1.2"/><rect x="5" y="5" width="4" height="4" fill="#e6e6e6" stroke="#909090"/></svg>
<svg class="a" style="left:970px;top:580px" width="28" height="22" viewBox="970 580 28 22"><path d="M981 586.6A5 5 0 1 0 987.2 587" stroke="#1a1a70" stroke-width="2.2" fill="none"/><path d="M984.2 585.8L989.6 583.6L988.8 589.4Z" fill="#1a1a70"/></svg>
<svg class="a" style="left:962px;top:610px" width="30" height="28" viewBox="962 610 30 28"><path d="M972 615.6H981.2L983.6 618V630.4H972Z" fill="#fff" stroke="#000" stroke-width="1.4"/><path d="M968.8 617.2V624.8M968.2 617.2H980M972.5 620.6H981.5M968.2 624.8H977" stroke="#000" stroke-width="1.3" fill="none"/><path d="M974.8 629C974.5 626.2 979 624.8 981 627.2M978.5 624.6L981 627.2L977.8 627.8" stroke="#000" stroke-width="1" fill="none"/></svg>
</div></body></html>
